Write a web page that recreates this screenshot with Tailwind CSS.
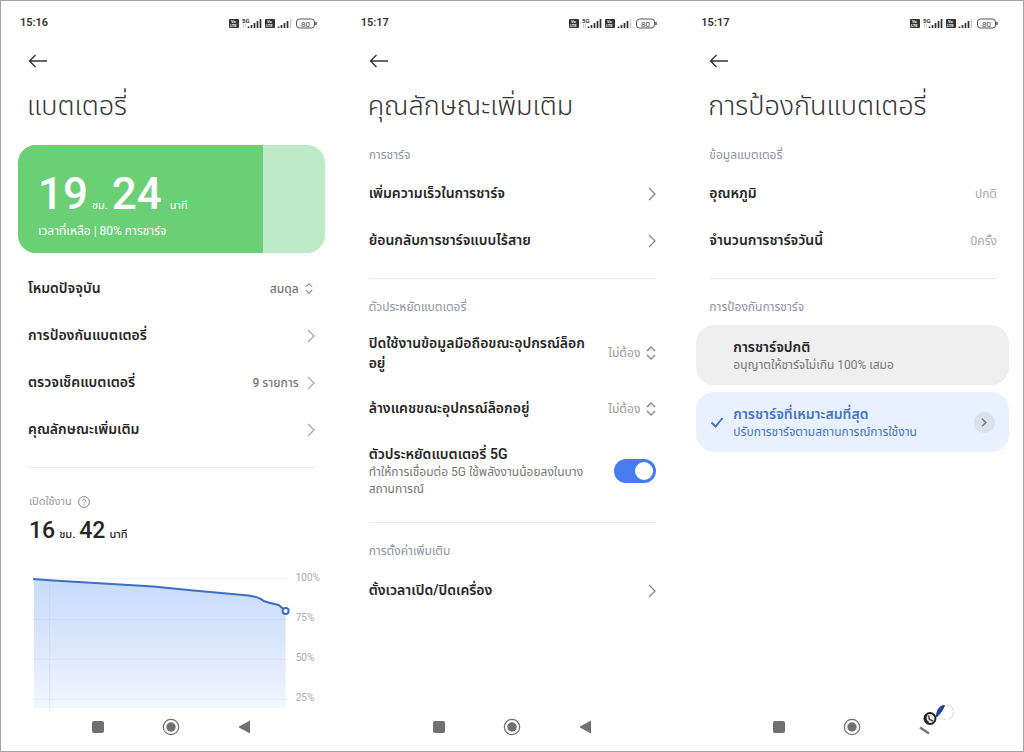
<!DOCTYPE html>
<html lang="th">
<head>
<meta charset="utf-8">
<meta name="viewport" content="width=device-width, initial-scale=1">
<title>แบตเตอรี่</title>
<script src="https://cdn.jsdelivr.net/npm/@tailwindcss/browser@4"></script>
</head>
<body class="bg-white">
<svg class="hidden" aria-hidden="true">
  <symbol id="status" viewBox="0 0 90 14">
    <g fill="#333"><rect x="1" y="2" width="10" height="9" rx="1"/><rect x="37" y="2" width="10" height="9" rx="1"/></g>
    <g fill="#fff" font-family="Roboto, sans-serif" font-weight="700" font-size="4"><text x="3" y="6">Vo</text><text x="2" y="10">LTE</text><text x="39" y="6">Vo</text><text x="38" y="10">LTE</text></g>
    <text x="14" y="6" font-family="Roboto, sans-serif" font-weight="700" font-size="6" fill="#333">5G</text>
    <path d="M15.500 7v3.500M17.500 7v3.500" stroke="#bbb" stroke-width=".8"/>
    <path d="M20.500 11V9.500M23.500 11V8M26.500 11V6M29.500 11V4M32.500 11V2M50.500 11V9.500M53.500 11V8M56.500 11V6M59.500 11V4" stroke="#333" stroke-width="1.700"/>
    <path d="M62.500 11V2" stroke="#ccc" stroke-width="1.500"/>
    <rect x="68.500" y="2" width="18" height="9" rx="3" fill="none" stroke="#555"/>
    <path d="M88 5v3" stroke="#555" stroke-width="1.500"/>
    <text x="73" y="9.500" font-family="Roboto, sans-serif" font-size="8" fill="#444">80</text>
  </symbol>
  <symbol id="back" viewBox="0 0 20 14"><path d="M19 7H1.500M7.500 1 1.500 7l6 6" fill="none" stroke="#333" stroke-width="1.400"/></symbol>
  <symbol id="chev" viewBox="0 0 8 14"><path d="M1 1l6 6-6 6" fill="none" stroke="currentColor" stroke-width="1.300"/></symbol>
  <symbol id="updown" viewBox="0 0 10 14"><path d="M1 5l4-4 4 4M1 9l4 4 4-4" fill="none" stroke="currentColor" stroke-width="1.300"/></symbol>
  <symbol id="nav-recent" viewBox="0 0 18 18"><rect x="3" y="3" width="12" height="12" rx="2" fill="#707070"/></symbol>
  <symbol id="nav-home" viewBox="0 0 18 18"><circle cx="9" cy="9" r="7.700" fill="none" stroke="#707070" stroke-width="1.200"/><circle cx="9" cy="9" r="4.700" fill="#707070"/></symbol>
  <symbol id="nav-back" viewBox="0 0 18 18"><path d="M15 2.500v13L4 9.500v-1z" fill="#707070"/></symbol>
</svg>

<div class="grid min-h-screen grid-cols-3 border border-[#a3a3a3] bg-[#fefefe] font-['Roboto','Noto_Sans_Thai',sans-serif] text-[#262626]">

  <section class="flex flex-col">
    <header>
      <div class="flex h-[45px] items-center justify-between pl-[19px] pr-[24px]">
        <span class="text-[11px] font-semibold text-[#333]">15:16</span>
        <svg class="h-[14px] w-[90px]"><use href="#status"/></svg>
      </div>
      <button type="button" aria-label="กลับ" class="flex h-[29px] items-center pl-[27px]"><svg class="h-[14px] w-5"><use href="#back"/></svg></button>
      <h1 class="h-[60px] whitespace-nowrap pl-[26px] text-[27px] font-light leading-[62px] text-[#333]">แบตเตอรี่</h1>
    </header>
    <div class="mx-[17px] mt-[10px] flex h-[108px] overflow-hidden rounded-[18px] bg-[#bdebc7] text-white">
      <div class="w-4/5 bg-[#6bcf75] pl-5 pt-6">
        <p class="flex items-baseline whitespace-nowrap"><span class="text-[44px] font-medium leading-[50px]">19</span><span class="ml-1 mr-1 text-[11px] leading-none">ชม.</span><span class="text-[44px] font-medium leading-[50px]">24</span><span class="ml-2 text-[11px] leading-none">นาที</span></p>
        <p class="whitespace-nowrap text-[12px] leading-6">เวลาที่เหลือ | 80% การชาร์จ</p>
      </div>
    </div>
    <div class="mt-3 pl-[27px] pr-[27px] text-[14px] font-semibold">
      <div class="flex h-[47px] items-center justify-between">
        <label for="mode">โหมดปัจจุบัน</label>
        <span class="flex items-center gap-[6px]"><select id="mode" class="appearance-none text-right text-[12px] font-medium text-[#777]"><option>สมดุล</option></select><svg class="mr-[2px] h-[11px] w-2 text-[#888]"><use href="#updown"/></svg></span>
      </div>
      <a href="#" class="flex h-[47px] items-center justify-between">การป้องกันแบตเตอรี่<svg class="h-[14px] w-2 text-[#aaa]"><use href="#chev"/></svg></a>
      <a href="#" class="flex h-[47px] items-center justify-between">ตรวจเช็คแบตเตอรี่<span class="flex items-center gap-2 text-[12px] font-medium text-[#777]">9 รายการ<svg class="h-[14px] w-2 text-[#aaa]"><use href="#chev"/></svg></span></a>
      <a href="#" class="flex h-[47px] items-center justify-between">คุณลักษณะเพิ่มเติม<svg class="h-[14px] w-2 text-[#aaa]"><use href="#chev"/></svg></a>
    </div>
    <hr class="ml-[27px] mr-[27px] mt-[14px] border-[#ececec]">
    <div class="pl-[28px] pt-6">
      <p class="flex h-5 items-center gap-[6px] text-[11px] text-[#999]">เปิดใช้งาน
        <svg class="h-3 w-3" viewBox="0 0 12 12"><circle cx="6" cy="6" r="5.400" fill="none" stroke="#888"/><path d="M4.300 4.800c0-2.200 3.400-2.200 3.400-.1C7.700 6 6 6 6 7.300M6 8.300v1" fill="none" stroke="#888"/></svg></p>
      <p class="flex items-baseline whitespace-nowrap"><span class="text-[23px] font-medium leading-[38px]">16</span><span class="ml-1 mr-1 text-[11px] font-medium leading-none">ชม.</span><span class="text-[23px] font-medium leading-[38px]">42</span><span class="ml-1 text-[11px] font-medium leading-none">นาที</span></p>
    </div>
    <div class="mt-5 flex pl-8 pr-5">
      <svg class="h-[142px] min-w-0 flex-1" viewBox="0 0 260 142" preserveAspectRatio="none">
        <defs><linearGradient id="area" x1="0" y1="0" x2="0" y2="1"><stop offset="0" stop-color="#c6dcf9"/><stop offset=".5" stop-color="#dbe6fc"/><stop offset="1" stop-color="#f2f6fe"/></linearGradient></defs>
        <path d="M1 9 40 12 120 17 160 21 225 27 234 32 245 35 252 41V138H1Z" fill="url(#area)"/>
        <path d="M0 8.500H254M0 49.500H254M0 89.500H254M0 129.500H254M16.500 9V142" stroke="#8090a0" stroke-opacity=".1"/>
        <path d="M0 9 20 10.500 70 13.500 120 16.500 160 20.500 215 25.500Q226 27 230 31 234 32.500 245 35L252 41" fill="none" stroke="#3a6fc4" stroke-width="2"/>
        <circle cx="252" cy="41" r="3" fill="#fff" stroke="#3a6fc4" stroke-width="2"/>
      </svg>
      <div class="w-7 pl-[2px] text-[10px] leading-[40px] text-[#aaa]">
        <div class="-mt-3 h-10">100%</div><div class="h-10">75%</div><div class="h-10">50%</div><div class="h-[34px]">25%</div>
      </div>
    </div>
    <nav class="mb-[9px] mt-auto flex h-[30px] items-center gap-[55px] pl-[88px]">
      <button type="button" aria-label="ล่าสุด"><svg class="h-[18px] w-[18px]"><use href="#nav-recent"/></svg></button>
      <button type="button" aria-label="หน้าหลัก"><svg class="h-[18px] w-[18px]"><use href="#nav-home"/></svg></button>
      <button type="button" aria-label="ย้อนกลับ"><svg class="h-[18px] w-[18px]"><use href="#nav-back"/></svg></button>
    </nav>
  </section>

  <section class="flex flex-col">
    <header>
      <div class="flex h-[45px] items-center justify-between pl-[19px] pr-[24px]">
        <span class="text-[11px] font-semibold text-[#333]">15:17</span>
        <svg class="h-[14px] w-[90px]"><use href="#status"/></svg>
      </div>
      <button type="button" aria-label="กลับ" class="flex h-[29px] items-center pl-[27px]"><svg class="h-[14px] w-5"><use href="#back"/></svg></button>
      <h1 class="h-[60px] whitespace-nowrap pl-[26px] text-[27px] font-light leading-[62px] text-[#333]">คุณลักษณะเพิ่มเติม</h1>
    </header>
    <div class="pl-[27px] pr-[26px] pt-[10px] text-[14px] font-semibold">
      <h2 class="mb-[5px] h-5 text-[12px] font-normal leading-5 text-[#8f93a3]">การชาร์จ</h2>
      <a href="#" class="flex h-[47px] items-center justify-between">เพิ่มความเร็วในการชาร์จ<svg class="h-[14px] w-2 text-[#888]"><use href="#chev"/></svg></a>
      <a href="#" class="flex h-[47px] items-center justify-between">ย้อนกลับการชาร์จแบบไร้สาย<svg class="h-[14px] w-2 text-[#888]"><use href="#chev"/></svg></a>
      <hr class="mb-[18px] mt-[14px] border-[#ececec]">
      <h2 class="mb-1 h-5 text-[12px] font-normal leading-5 text-[#8f93a3]">ตัวประหยัดแบตเตอรี่</h2>
      <div class="flex h-16 items-center justify-between whitespace-nowrap">
        <label for="data" class="leading-5">ปิดใช้งานข้อมูลมือถือขณะอุปกรณ์ล็อก<br>อยู่</label>
        <span class="flex items-center gap-[6px]"><select id="data" class="appearance-none text-right text-[12px] font-normal text-[#999]"><option>ไม่ต้อง</option></select><svg class="h-[14px] w-[10px] text-[#888]"><use href="#updown"/></svg></span>
      </div>
      <div class="flex h-[47px] items-center justify-between whitespace-nowrap">
        <label for="cache">ล้างแคชขณะอุปกรณ์ล็อกอยู่</label>
        <span class="flex items-center gap-[6px]"><select id="cache" class="appearance-none text-right text-[12px] font-normal text-[#999]"><option>ไม่ต้อง</option></select><svg class="h-[14px] w-[10px] text-[#888]"><use href="#updown"/></svg></span>
      </div>
      <div class="flex h-[78px] items-center justify-between whitespace-nowrap">
        <label for="saver" class="leading-5">ตัวประหยัดแบตเตอรี่ 5G<span class="block text-[12px] font-normal leading-[17px] text-[#777]">ทำให้การเชื่อมต่อ 5G ใช้พลังงานน้อยลงในบาง<br>สถานการณ์</span></label>
        <input id="saver" type="checkbox" role="switch" checked class="h-6 w-[42px] shrink-0 appearance-none rounded-full bg-gray-300 p-[3px] before:block before:size-[18px] before:rounded-full before:bg-white checked:bg-[#477bf0] checked:before:translate-x-[18px]">
      </div>
      <hr class="mb-[18px] mt-3 border-[#ececec]">
      <h2 class="mb-[6px] h-5 text-[12px] font-normal leading-5 text-[#8f93a3]">การตั้งค่าเพิ่มเติม</h2>
      <a href="#" class="flex h-[47px] items-center justify-between">ตั้งเวลาเปิด/ปิดเครื่อง<svg class="h-[14px] w-2 text-[#888]"><use href="#chev"/></svg></a>
    </div>
    <nav class="mb-[9px] mt-auto flex h-[30px] items-center gap-[55px] pl-[88px]">
      <button type="button" aria-label="ล่าสุด"><svg class="h-[18px] w-[18px]"><use href="#nav-recent"/></svg></button>
      <button type="button" aria-label="หน้าหลัก"><svg class="h-[18px] w-[18px]"><use href="#nav-home"/></svg></button>
      <button type="button" aria-label="ย้อนกลับ"><svg class="h-[18px] w-[18px]"><use href="#nav-back"/></svg></button>
    </nav>
  </section>

  <section class="flex flex-col">
    <header>
      <div class="flex h-[45px] items-center justify-between pl-[19px] pr-[24px]">
        <span class="text-[11px] font-semibold text-[#333]">15:17</span>
        <svg class="h-[14px] w-[90px]"><use href="#status"/></svg>
      </div>
      <button type="button" aria-label="กลับ" class="flex h-[29px] items-center pl-[27px]"><svg class="h-[14px] w-5"><use href="#back"/></svg></button>
      <h1 class="h-[60px] whitespace-nowrap pl-[26px] text-[27px] font-light leading-[62px] text-[#333]">การป้องกันแบตเตอรี่</h1>
    </header>
    <div class="pl-[27px] pr-[26px] pt-[10px] text-[14px] font-semibold">
      <h2 class="mb-[5px] h-5 text-[12px] font-normal leading-5 text-[#8f93a3]">ข้อมูลแบตเตอรี่</h2>
      <dl>
        <div class="flex h-[47px] items-center justify-between"><dt>อุณหภูมิ</dt><dd class="text-[12px] font-normal text-[#aaa]">ปกติ</dd></div>
        <div class="flex h-[47px] items-center justify-between"><dt>จำนวนการชาร์จวันนี้</dt><dd class="text-[12px] font-normal text-[#aaa]">0ครั้ง</dd></div>
      </dl>
      <hr class="mb-[18px] mt-[14px] border-[#ececec]">
      <h2 class="h-5 text-[12px] font-normal leading-5 text-[#8f93a3]">การป้องกันการชาร์จ</h2>
    </div>
    <div class="mt-2 flex flex-col gap-[7px] px-[14px] text-left text-[14px] font-semibold">
      <button type="button" class="flex h-[60px] items-center rounded-[18px] bg-[#efefef] pl-[37px] text-left">
        <span class="leading-5">การชาร์จปกติ<span class="block text-[12px] font-normal leading-[17px] text-[#777]">อนุญาตให้ชาร์จไม่เกิน 100% เสมอ</span></span>
      </button>
      <button type="button" class="flex h-[60px] items-center rounded-[18px] bg-[#eaf1fe] pl-[14px] pr-[14px] text-left text-[#4573c4]">
        <svg class="mr-[9px] h-[14px] w-[14px]" viewBox="0 0 14 14"><path d="M1.500 7.500 5.500 11.500 12.500 3" fill="none" stroke="#4573c4" stroke-width="1.900"/></svg>
        <span class="leading-5">การชาร์จที่เหมาะสมที่สุด<span class="block text-[12px] font-normal leading-[17px]">ปรับการชาร์จตามสถานการณ์การใช้งาน</span></span>
        <span class="ml-auto flex size-[21px] items-center justify-center rounded-full bg-[#dce1ec]"><svg class="h-[9px] w-[6px] text-[#777]" viewBox="0 0 6 9"><path d="M1 .8 4.800 4.500 1 8.200" fill="none" stroke="currentColor" stroke-width="1.500"/></svg></span>
      </button>
    </div>
    <nav class="mb-[9px] mt-auto flex h-[30px] items-center gap-[55px] pl-[88px]">
      <button type="button" aria-label="ล่าสุด"><svg class="h-[18px] w-[18px]"><use href="#nav-recent"/></svg></button>
      <button type="button" aria-label="หน้าหลัก"><svg class="h-[18px] w-[18px]"><use href="#nav-home"/></svg></button>
      <button type="button" aria-label="ย้อนกลับ" class="relative size-[18px]">
        <svg class="absolute bottom-0 left-0 h-9 w-10" viewBox="0 0 40 36">
          <path d="M4 27.500 13 33.500" stroke="#777" stroke-width="2.500"/>
          <circle cx="30" cy="12" r="7.500" fill="#fff" stroke="#d5d5d5" stroke-dasharray="9 3"/>
          <path d="M20.500 17C20.500 11 23 6 28.500 5.500 27 9 25 13 20.500 17Z" fill="#2444b8" stroke="#1b2f7a"/>
          <circle cx="14" cy="18.500" r="5.500" fill="#eee" stroke="#222" stroke-width="2"/>
          <path d="M10.500 14.500a5.500 5.500 0 0 0 2 8.500" fill="none" stroke="#222" stroke-width="2.500"/>
          <path d="M12.500 15.500l1 4 3.500 1.500" fill="none" stroke="#444" stroke-width="1.500"/>
        </svg>
      </button>
    </nav>
  </section>
</div>
</body>
</html>
